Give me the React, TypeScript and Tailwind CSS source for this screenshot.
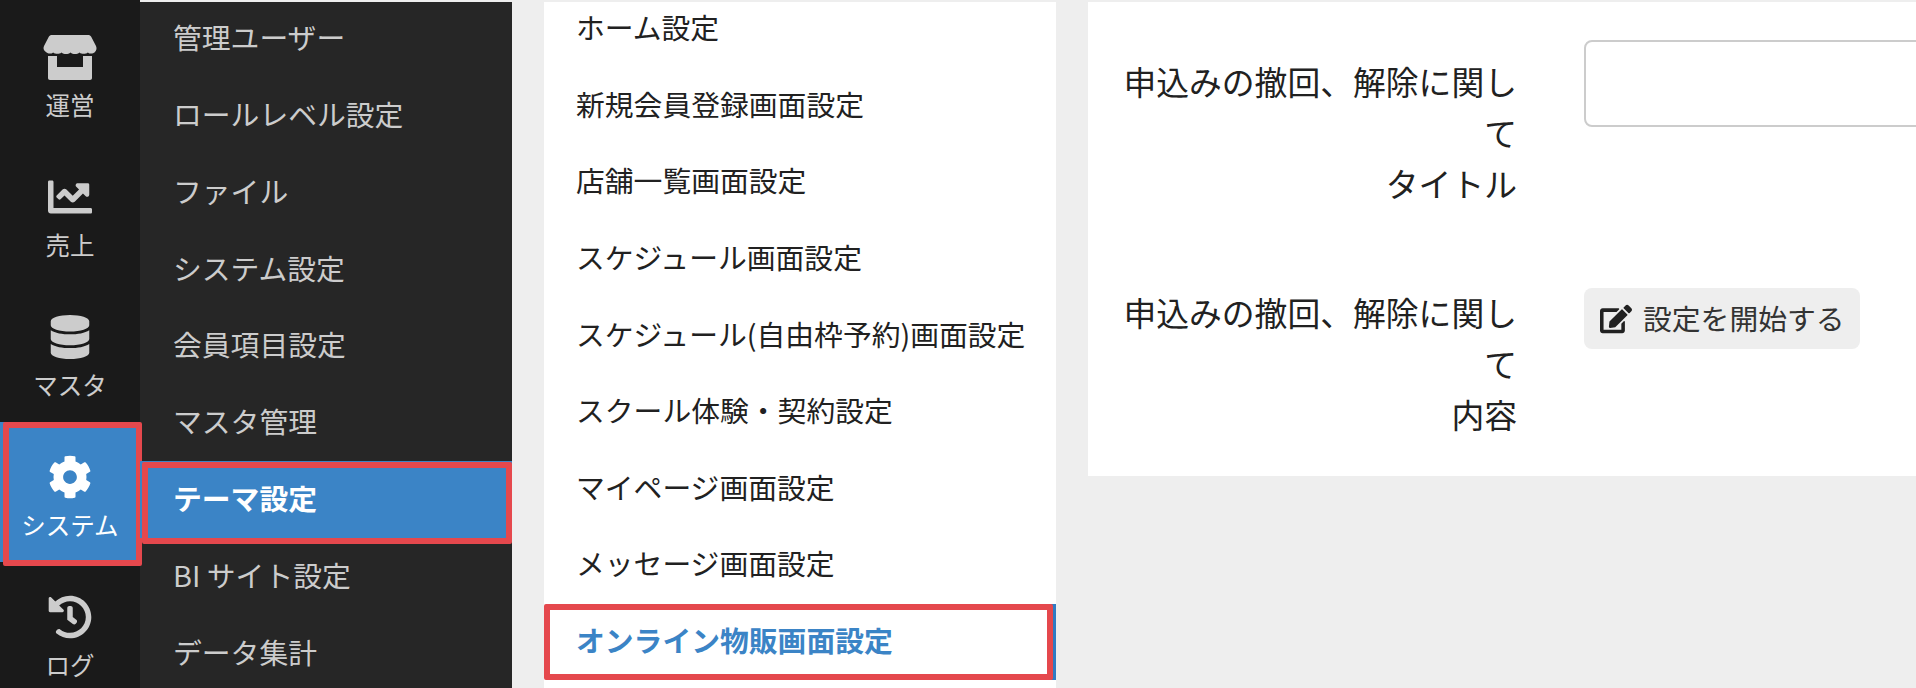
import { FC, ReactNode } from 'react';
import { FaChartLine, FaCog, FaDatabase, FaEdit, FaHistory } from 'react-icons/fa';

const font = { fontFamily: '"Noto Sans CJK JP", "Noto Sans", sans-serif' };

const StoreIcon = () => (
  <svg viewBox="0 0 54 45" className="w-[54px] h-[45px]" fill="#cccccc">
    <path d="M9 0h36c1.500 0 2.500.6 3.200 1.800L53 11c1 2.200.6 4.600-1.200 6.200-2 1.800-5 1.800-7 .2-2.200 1.900-6 2-8.300 0-2.400 2-6.600 2-9 0-2.400 2-6.600 2-9 0-2.300 2-6.100 1.900-8.300 0-2 1.600-5 1.600-7-.2C.4 15.600 0 13.200 1 11l4.800-9.200C6.500.6 7.500 0 9 0z" />
    <path d="M5 21h9v11h26V21h9v22c0 1.200-.8 2-2 2H7c-1.200 0-2-.8-2-2z" />
  </svg>
);

const railItems: { label: string; icon: ReactNode; active?: boolean }[] = [
  { label: '運営', icon: <StoreIcon /> },
  { label: '売上', icon: <FaChartLine size={44} /> },
  { label: 'マスタ', icon: <FaDatabase size={44} /> },
  { label: 'システム', icon: <FaCog size={44} />, active: true },
  { label: 'ログ', icon: <FaHistory size={44} /> },
];

const subItems = [
  '管理ユーザー',
  'ロールレベル設定',
  'ファイル',
  'システム設定',
  '会員項目設定',
  'マスタ管理',
  'テーマ設定',
  'BI サイト設定',
  'データ集計',
];

const listItems = [
  'ホーム設定',
  '新規会員登録画面設定',
  '店舗一覧画面設定',
  'スケジュール画面設定',
  'スケジュール(自由枠予約)画面設定',
  'スクール体験・契約設定',
  'マイページ画面設定',
  'メッセージ画面設定',
  'オンライン物販画面設定',
];

const Rail: FC = () => (
  <div className="w-[140px] shrink-0 bg-[#1a1a1a] pt-[2px]">
    {railItems.map((item) => (
      <div
        key={item.label}
        className={`relative h-[140px] pt-[30px] flex flex-col items-center ${
          item.active ? 'bg-[#3b84c6] text-white' : 'text-[#cccccc]'
        }`}
      >
        <div className="h-[50px] flex items-center justify-center">{item.icon}</div>
        <div className="text-[24.5px] leading-[46px]">{item.label}</div>
        {item.active && (
          <div className="absolute left-[3px] -right-[2px] top-0 bottom-[-4px] border-[6px] border-[#e5484d] rounded-[2px]" />
        )}
      </div>
    ))}
  </div>
);

const SubNav: FC = () => (
  <div className="w-[372px] shrink-0 bg-[#262626] mt-[2px]">
    <div className="-mt-[2px]">
      {subItems.map((item) => {
        const active = item === 'テーマ設定';
        return (
          <div
            key={item}
            className={`relative h-[76.8px] pl-[33px] pb-[3px] flex items-center text-[28.8px] ${
              active ? 'bg-[#3b84c6] text-white font-bold' : 'text-[#cccccc]'
            }`}
          >
            {item}
            {active && (
              <div className="absolute left-[2px] right-0 top-[1px] -bottom-[6px] border-[6px] border-[#e5484d] rounded-[2px]" />
            )}
          </div>
        );
      })}
    </div>
  </div>
);

const SettingsList: FC = () => (
  <div className="w-[512px] ml-[32px] shrink-0 bg-white mt-[2px]">
    <div className="-mt-[11px]">
      {listItems.map((item) => {
        const active = item === 'オンライン物販画面設定';
        return (
          <div
            key={item}
            className={`relative h-[76.6px] pl-[32px] pb-[5px] flex items-center text-[28.8px] ${
              active ? 'text-[#3b84c6] font-bold border-r-[6px] border-[#2f7cc4]' : 'text-[#212121]'
            }`}
          >
            {item}
            {active && (
              <div className="absolute left-0 -right-[3px] top-0 bottom-0 border-[6px] border-[#e5484d] rounded-[2px]" />
            )}
          </div>
        );
      })}
    </div>
  </div>
);

const FormPanel: FC = () => (
  <div className="flex-1 ml-[32px] mt-[2px] h-[474px] bg-white pl-[33px] pt-[38px] text-[#212121] overflow-hidden">
    <div className="flex items-start">
      <div className="w-[396px] shrink-0 pt-[15px] text-right text-[32.8px] leading-[51px]">
        申込みの撤回、解除に関して
        <br />
        タイトル
      </div>
      <div className="ml-[67px] w-[600px] h-[87px] shrink-0 border-2 border-[#cccccc] rounded-[8px]" />
    </div>
    <div className="flex items-start mt-[80px]">
      <div className="w-[396px] -mt-[2px] shrink-0 text-right text-[32.8px] leading-[51px]">
        申込みの撤回、解除に関して
        <br />
        内容
      </div>
      <button className="ml-[67px] h-[61px] w-[276px] shrink-0 rounded-[8px] bg-[#eeeeee] flex items-center pl-[16px] pb-[2px] text-[28.8px] text-[#333333]">
        <FaEdit size={32} className="mr-[11px] mt-[2px] text-[#212121]" />
        設定を開始する
      </button>
    </div>
  </div>
);

const App: FC = () => {
  return (
    <div style={font} className="flex w-[1916px] h-[688px] overflow-hidden bg-[#eeeeee]">
      <Rail />
      <SubNav />
      <SettingsList />
      <FormPanel />
    </div>
  );
};

export default App;
